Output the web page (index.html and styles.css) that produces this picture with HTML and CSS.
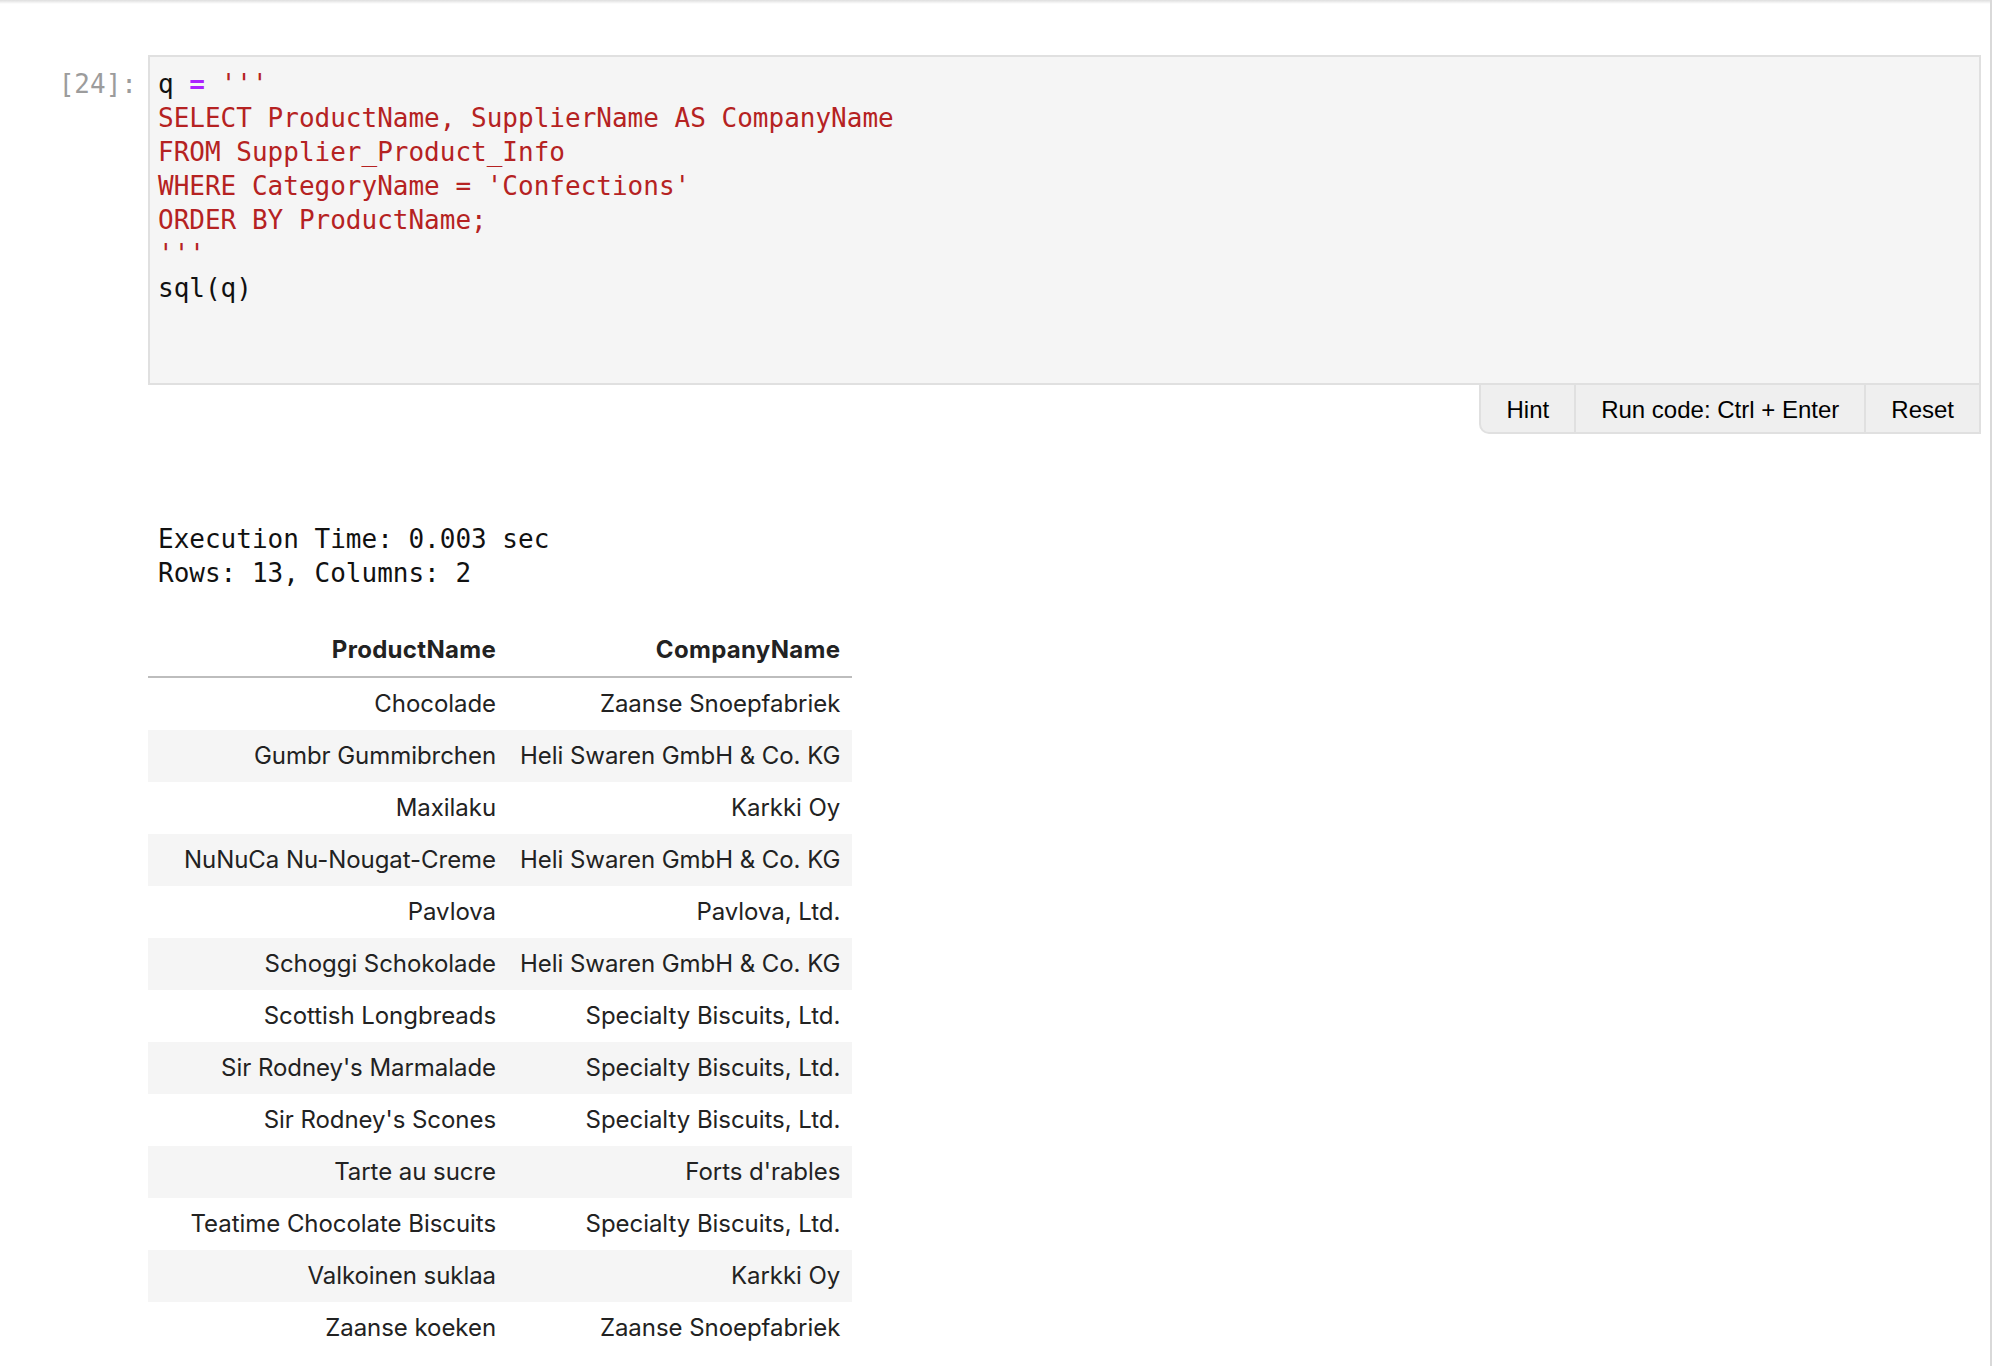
FILE: index.html
```html
<!DOCTYPE html>
<html lang="en">
<head>
<meta charset="utf-8">
<title>Notebook cell</title>
<link rel="stylesheet" href="styles.css">
</head>
<body>
<main class="notebook">
  <div class="topbar"></div>
  <section class="cell">
    <div class="prompt">[24]:</div>
    <div class="input">
      <div class="code">
        <div class="line"><span class="var">q</span> <span class="op">=</span> <span class="str">'''</span></div>
        <div class="line str">SELECT ProductName, SupplierName AS CompanyName</div>
        <div class="line str">FROM Supplier_Product_Info</div>
        <div class="line str">WHERE CategoryName = 'Confections'</div>
        <div class="line str">ORDER BY ProductName;</div>
        <div class="line str">'''</div>
        <div class="line var">sql(q)</div>
      </div>
    </div>
    <div class="actions">
      <button class="btn">Hint</button>
      <button class="btn">Run code: Ctrl + Enter</button>
      <button class="btn">Reset</button>
    </div>
    <div class="output">
      <div class="stdout">
        <div class="line">Execution Time: 0.003 sec</div>
        <div class="line">Rows: 13, Columns: 2</div>
      </div>
      <table class="frame">
        <thead>
          <tr><th class="idx"></th><th>ProductName</th><th>CompanyName</th></tr>
        </thead>
        <tbody>
          <tr><td class="idx"></td><td>Chocolade</td><td>Zaanse Snoepfabriek</td></tr>
          <tr><td class="idx"></td><td>Gumbr Gummibrchen</td><td>Heli Swaren GmbH &amp; Co. KG</td></tr>
          <tr><td class="idx"></td><td>Maxilaku</td><td>Karkki Oy</td></tr>
          <tr><td class="idx"></td><td>NuNuCa Nu-Nougat-Creme</td><td>Heli Swaren GmbH &amp; Co. KG</td></tr>
          <tr><td class="idx"></td><td>Pavlova</td><td>Pavlova, Ltd.</td></tr>
          <tr><td class="idx"></td><td>Schoggi Schokolade</td><td>Heli Swaren GmbH &amp; Co. KG</td></tr>
          <tr><td class="idx"></td><td>Scottish Longbreads</td><td>Specialty Biscuits, Ltd.</td></tr>
          <tr><td class="idx"></td><td>Sir Rodney's Marmalade</td><td>Specialty Biscuits, Ltd.</td></tr>
          <tr><td class="idx"></td><td>Sir Rodney's Scones</td><td>Specialty Biscuits, Ltd.</td></tr>
          <tr><td class="idx"></td><td>Tarte au sucre</td><td>Forts d'rables</td></tr>
          <tr><td class="idx"></td><td>Teatime Chocolate Biscuits</td><td>Specialty Biscuits, Ltd.</td></tr>
          <tr><td class="idx"></td><td>Valkoinen suklaa</td><td>Karkki Oy</td></tr>
          <tr><td class="idx"></td><td>Zaanse koeken</td><td>Zaanse Snoepfabriek</td></tr>
        </tbody>
      </table>
    </div>
  </section>
</main>
</body>
</html>
```
FILE: styles.css
```css
html, body {
  margin: 0;
  padding: 0;
  background: #ffffff;
}

body {
  font-family: "DejaVu Sans Mono", monospace;
  color: #111111;
}

.notebook {
  width: 1992px;
  min-height: 1366px;
  box-sizing: border-box;
  border-right: 2px solid #d9d9d9;
}

.topbar {
  height: 4px;
  background: linear-gradient(to bottom, rgba(0, 0, 0, 0.13), rgba(0, 0, 0, 0));
}

.cell {
  display: grid;
  grid-template-columns: 148px 1833px;
  margin-top: 51px;
}

.prompt {
  grid-column: 1;
  grid-row: 1;
  font-family: "DejaVu Sans Mono", monospace;
  font-size: 26px;
  line-height: 34px;
  color: #9c9c9c;
  text-align: right;
  padding-top: 12px;
  padding-right: 11px;
}

.input {
  grid-column: 2;
  grid-row: 1;
  border: 2px solid #e0e0e0;
  background: #f5f5f5;
  padding: 10px 8px 78px;
}

.code, .stdout {
  margin: 0;
  font-family: "DejaVu Sans Mono", monospace;
  font-size: 26px;
  line-height: 34px;
}

.line {
  white-space: pre;
  height: 34px;
}

.var { color: #111111; }
.op { color: #aa22ff; font-weight: bold; }
.str { color: #b52222; }

.actions {
  grid-column: 2;
  grid-row: 2;
  justify-self: end;
  display: flex;
  background: #efefef;
  border: 2px solid #e0e0e0;
  border-top: 0;
  border-bottom-left-radius: 10px;
}

.btn {
  font-family: "Liberation Sans", Arial, sans-serif;
  font-size: 24px;
  color: #000000;
  background: transparent;
  border: 0;
  height: 47px;
  line-height: 44px;
  padding: 3px 25px 0;
  margin: 0;
}

.btn + .btn {
  border-left: 2px solid #e0e0e0;
}

.output {
  grid-column: 2;
  grid-row: 3;
  padding-top: 88px;
}

.stdout {
  padding-left: 10px;
  color: #111111;
}

.frame {
  margin-top: 34px;
  border-collapse: separate;
  border-spacing: 0;
  font-family: Inter, "Noto Sans", sans-serif;
  font-size: 24px;
  color: #222222;
}

.frame th, .frame td {
  padding: 12px;
  line-height: 28px;
  text-align: right;
  white-space: nowrap;
}

.frame td {
  letter-spacing: -0.05px;
}

.frame th {
  font-weight: 700;
  letter-spacing: 0.3px;
  border-bottom: 2px solid #bdbdbd;
}

.frame .idx {
  padding: 12px;
}

.frame tbody tr:nth-child(even) {
  background: #f5f5f5;
}
```
